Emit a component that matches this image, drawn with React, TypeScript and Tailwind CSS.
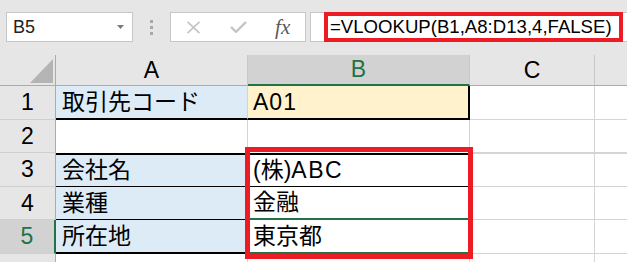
import React from 'react'

const font = { fontFamily: '"Liberation Sans", "Noto Sans CJK JP", sans-serif' }

function Corner() {
  return (
    <div className="flex items-end justify-end pr-[2px] pb-[2px] bg-[#e6e6e6] border-r border-b border-[#ababab]">
      <svg width="23" height="24" viewBox="0 0 23 24">
        <polygon points="23,0 23,24 0,24" fill="#b4b4b4" />
      </svg>
    </div>
  )
}

export default function App() {
  const grid = 'border-[#d4d4d4]'
  return (
    <div className="relative w-[627px] h-[262px] overflow-hidden bg-[#e6e6e6] text-black" style={font}>
      {/* formula bar */}
      <div className="flex items-start h-[55px] pt-[12px]">
        <div className="ml-[6px] w-[127px] h-[30px] flex items-center justify-between bg-white border border-[#c6c6c6] pl-[6px] pr-[8px]">
          <span className="text-[18px] text-[#222]">B5</span>
          <svg width="7" height="4" viewBox="0 0 7 4">
            <polygon points="0,0 7,0 3.5,4" fill="#7a7a7a" />
          </svg>
        </div>
        <div className="w-[37px] h-[30px] flex flex-col items-center justify-center gap-[3px]">
          <span className="w-[3px] h-[3px] bg-[#a8a8a8]" />
          <span className="w-[3px] h-[3px] bg-[#a8a8a8]" />
          <span className="w-[3px] h-[3px] bg-[#a8a8a8]" />
        </div>
        <div className="w-[136px] h-[30px] flex items-center bg-white border border-[#c6c6c6]">
          <span className="w-[45px] flex justify-center">
            <svg width="15" height="13" viewBox="0 0 15 13">
              <path d="M1.5 0.8 L13.5 12.2 M13.5 0.8 L1.5 12.2" stroke="#c4c4c4" strokeWidth="1.6" />
            </svg>
          </span>
          <span className="w-[45px] flex justify-center">
            <svg width="17" height="12" viewBox="0 0 17 12">
              <path d="M1 6 L6 10.8 L16 1" stroke="#c4c4c4" strokeWidth="2.4" fill="none" />
            </svg>
          </span>
          <span className="w-[45px] flex justify-center text-[21px] italic text-[#5a5a5a] leading-none" style={{ fontFamily: '"Liberation Serif", serif' }}>
            fx
          </span>
        </div>
        <div className="ml-[4px] flex-1 h-[30px] flex items-stretch bg-white border-l border-y border-[#c6c6c6] pl-[13px]">
          <span className="w-[299px] -my-px flex items-center border-[4px] border-[#ed1c24] pl-[2px] text-[18.6px] whitespace-nowrap">
            =VLOOKUP(B1,A8:D13,4,FALSE)
          </span>
        </div>
      </div>

      {/* sheet */}
      <div className="grid grid-cols-[56px_192px_222px_125px_1fr] grid-rows-[31px_34px_33px_34px_33px_34px_1fr] h-[207px] bg-white text-[23px]">
        <Corner />
        <div className="flex items-center justify-center bg-[#e6e6e6] border-r border-b border-r-[#c8c8c8] border-b-[#ababab]">A</div>
        <div className="flex items-center justify-center bg-[#d2d2d2] border-r border-r-[#c8c8c8] border-b-2 border-b-[#217346] text-[#217346]">B</div>
        <div className="flex items-center justify-center bg-[#e6e6e6] border-r border-b border-r-[#c8c8c8] border-b-[#ababab]">C</div>
        <div className="bg-[#e6e6e6] border-b border-[#ababab]" />

        {/* row 1 */}
        <div className="flex items-center justify-center bg-[#e6e6e6] border-r border-b border-r-[#ababab] border-b-[#cfcfcf]">1</div>
        <div className={`flex items-center pl-[6px] bg-[#ddebf7] border-r ${grid} border-b-2 border-b-black`}>取引先コード</div>
        <div className="flex items-center pl-[5px] bg-[#fff2cc] border-r-2 border-b-2 border-black tracking-[1px]">A01</div>
        <div className={`border-r border-b ${grid}`} />
        <div className={`border-b ${grid}`} />

        {/* row 2 */}
        <div className="flex items-center justify-center bg-[#e6e6e6] border-r border-b border-r-[#ababab] border-b-[#cfcfcf]">2</div>
        <div className={`border-r ${grid}`} />
        <div className={`border-r ${grid}`} />
        <div className={`border-r border-b ${grid}`} />
        <div className={`border-b ${grid}`} />

        {/* row 3 */}
        <div className="flex items-center justify-center bg-[#e6e6e6] border-r border-b border-r-[#ababab] border-b-[#cfcfcf]">3</div>
        <div className={`flex items-center pl-[6px] bg-[#ddebf7] border-r ${grid} border-t-2 border-t-black border-b border-b-black`}>会社名</div>
        <div className={`flex items-center pl-[5px] border-r ${grid} border-t-2 border-t-black border-b border-b-black`}>
          (株)<span className="tracking-[1.5px]">ABC</span>
        </div>
        <div className={`border-r border-b border-t ${grid}`} />
        <div className={`border-b border-t ${grid}`} />

        {/* row 4 */}
        <div className="flex items-center justify-center bg-[#e6e6e6] border-r border-b border-r-[#ababab] border-b-[#cfcfcf]">4</div>
        <div className={`flex items-center pl-[6px] bg-[#ddebf7] border-r ${grid} border-b border-b-black`}>業種</div>
        <div className={`flex items-center pl-[5px] border-r ${grid} border-b-2 border-b-[#217346]`}>金融</div>
        <div className={`border-r border-b ${grid}`} />
        <div className={`border-b ${grid}`} />

        {/* row 5 */}
        <div className="flex items-center justify-center bg-[#d2d2d2] border-r-2 border-r-[#217346] border-b border-b-[#cfcfcf] text-[#217346]">5</div>
        <div className={`flex items-center pl-[6px] bg-[#ddebf7] border-r ${grid} border-b-2 border-b-black`}>所在地</div>
        <div className={`flex items-center pl-[5px] border-r ${grid} border-b-2 border-b-[#217346]`}>東京都</div>
        <div className={`border-r border-b ${grid}`} />
        <div className={`border-b ${grid}`} />

        {/* row 6 */}
        <div className="bg-[#e6e6e6] border-r border-[#ababab]" />
        <div className={`border-r ${grid}`} />
        <div className={`border-r ${grid}`} />
        <div className={`border-r ${grid}`} />
        <div />
      </div>

      {/* highlight annotation */}
      <div className="absolute left-[245px] top-[147px] w-[228px] h-[112px] border-[5px] border-[#ed1c24]" />
    </div>
  )
}
